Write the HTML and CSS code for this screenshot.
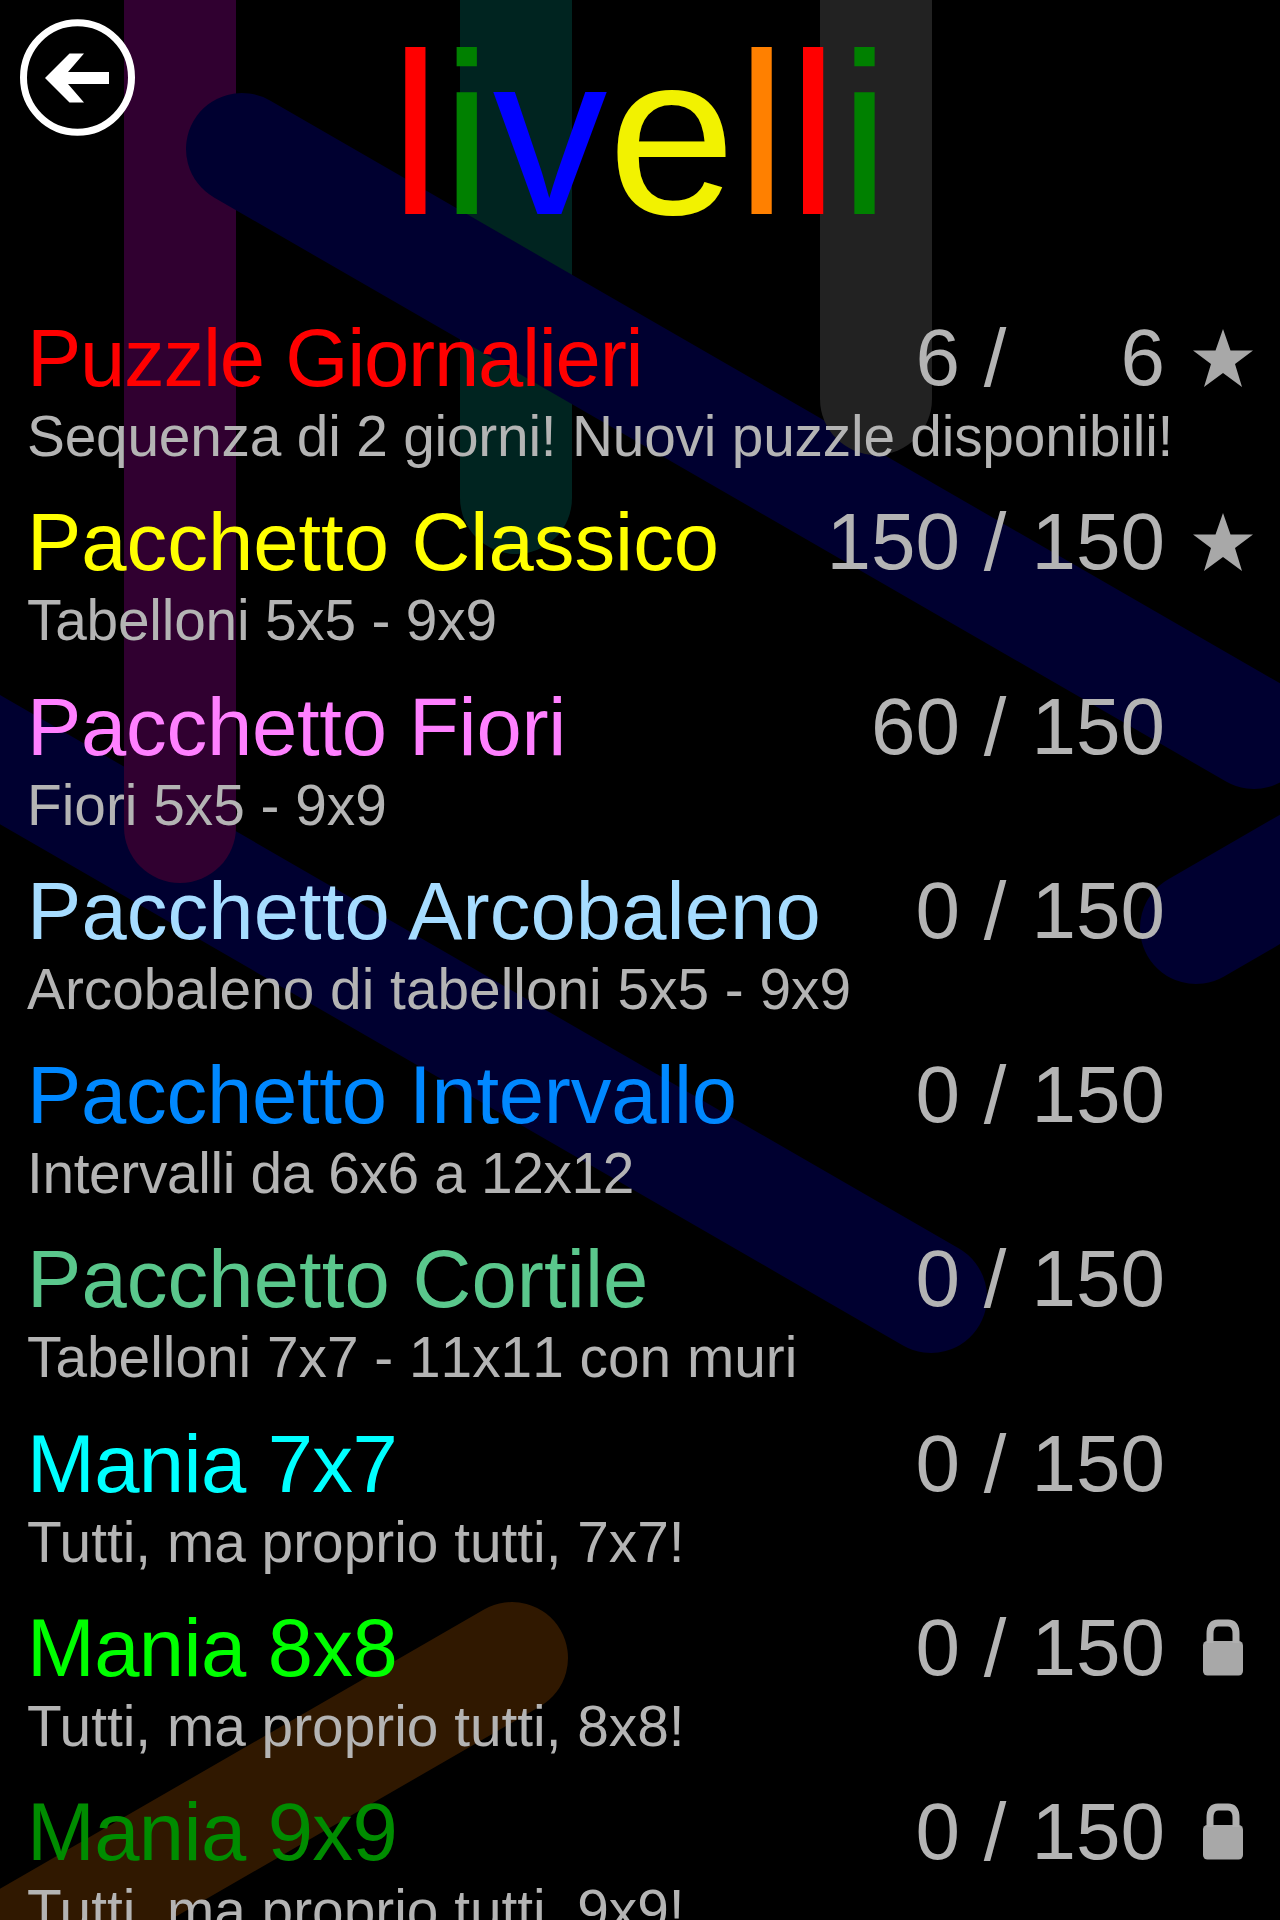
FILE: index.html
```html
<!DOCTYPE html>
<html lang="it">
<head>
<meta charset="utf-8">
<title>Livelli</title>
<link rel="stylesheet" href="styles.css">
</head>
<body>
<main class="screen">
  <svg class="pipes" viewBox="0 0 1280 1920" aria-hidden="true">
    <path class="pipe teal" d="M516 -80V498"/>
    <path class="pipe blue" d="M-100 702L931 1297M1196 928L1400 810"/>
    <path class="pipe purple" d="M180 -80V827"/>
    <path class="pipe blue" d="M242 149L1254 733"/>
    <path class="pipe gray" d="M876 -80V399"/>
    <path class="pipe orange" d="M512 1658L-100 2011"/>
  </svg>
  <header class="top">
    <svg class="back" viewBox="0 0 116 118" aria-label="Indietro">
      <ellipse cx="57.500" cy="58.500" rx="54" ry="54.700" fill="none" stroke="#fff" stroke-width="7"/>
      <path d="M25 59L49.500 34.500H64L48 53H89V65H48L64 83.500H49.500Z" fill="#fff"/>
    </svg>
    <h1 class="title"><span class="red">l</span><span class="green">i</span><span class="royal">v</span><span class="yellow">e</span><span class="tangerine">l</span><span class="red">l</span><span class="green">i</span></h1>
  </header>
  <section class="packs">
    <article class="pack"><h2 class="name c1">Puzzle Giornalieri</h2><span class="num">6</span><span class="slash">/</span><span class="num">6</span><svg class="icon" viewBox="0 0 60 58"><path d="M30 0L37.500 21.500H60L42 35L49 58L30 44L11 58L18 35L0 21.500H22.500Z"/></svg><p class="info i1">Sequenza di 2 giorni! Nuovi puzzle disponibili!</p></article>
    <article class="pack"><h2 class="name c2">Pacchetto Classico</h2><span class="num">150</span><span class="slash">/</span><span class="num">150</span><svg class="icon" viewBox="0 0 60 58"><path d="M30 0L37.500 21.500H60L42 35L49 58L30 44L11 58L18 35L0 21.500H22.500Z"/></svg><p class="info i1">Tabelloni 5x5 - 9x9</p></article>
    <article class="pack"><h2 class="name c3">Pacchetto Fiori</h2><span class="num">60</span><span class="slash">/</span><span class="num">150</span><p class="info">Fiori 5x5 - 9x9</p></article>
    <article class="pack"><h2 class="name c4">Pacchetto Arcobaleno</h2><span class="num">0</span><span class="slash">/</span><span class="num">150</span><p class="info">Arcobaleno di tabelloni 5x5 - 9x9</p></article>
    <article class="pack"><h2 class="name c5">Pacchetto Intervallo</h2><span class="num">0</span><span class="slash">/</span><span class="num">150</span><p class="info i5">Intervalli da 6x6 a 12x12</p></article>
    <article class="pack"><h2 class="name c6">Pacchetto Cortile</h2><span class="num">0</span><span class="slash">/</span><span class="num">150</span><p class="info">Tabelloni 7x7 - <span class="loose">11x11</span> con muri</p></article>
    <article class="pack"><h2 class="name c7">Mania 7x7</h2><span class="num">0</span><span class="slash">/</span><span class="num">150</span><p class="info">Tutti, ma proprio tutti, 7x7!</p></article>
    <article class="pack"><h2 class="name c8">Mania 8x8</h2><span class="num">0</span><span class="slash">/</span><span class="num">150</span><svg class="icon" viewBox="0 0 60 58"><rect x="10" y="22" width="40" height="34.500" rx="4.500"/><path class="shackle" d="M17 24V15Q17 4 25 4H35Q43 4 43 15V24"/></svg><p class="info">Tutti, ma proprio tutti, 8x8!</p></article>
    <article class="pack"><h2 class="name c9">Mania 9x9</h2><span class="num">0</span><span class="slash">/</span><span class="num">150</span><svg class="icon" viewBox="0 0 60 58"><rect x="10" y="22" width="40" height="34.500" rx="4.500"/><path class="shackle" d="M17 24V15Q17 4 25 4H35Q43 4 43 15V24"/></svg><p class="info">Tutti, ma proprio tutti, 9x9!</p></article>
  </section>
</main>
</body>
</html>
```
FILE: styles.css
```css
* { box-sizing: border-box; }
body { margin: 0; background: #000; }
.screen {
  position: relative;
  width: 1280px;
  height: 1920px;
  overflow: hidden;
  background: #000;
  font-family: "Liberation Sans", Arial, sans-serif;
  color: #b4b4b4;
}
.pipes { position: absolute; inset: 0; width: 1280px; height: 1920px; }
.pipe { fill: none; stroke-width: 112; stroke-linecap: round; }
.pipe.teal { stroke: #002420; }
.pipe.blue { stroke: #000030; }
.pipe.purple { stroke: #300030; }
.pipe.gray { stroke: #222; }
.pipe.orange { stroke: #301800; }

.top {
  position: relative;
  display: grid;
  grid-template-columns: 116px 1fr 116px;
  height: 309px;
  padding: 19px 20px 0;
}
.back { width: 116px; height: 118px; }
.title {
  margin: 0;
  text-align: center;
  font-size: 230px;
  font-weight: 400;
  line-height: 232px;
  letter-spacing: 0.3px;
}
.red { color: #f00; }
.green { color: #008000; }
.royal { color: #00f; }
.yellow { color: #f2f200; }
.tangerine { color: #ff8000; }

.packs { position: relative; }
.pack {
  display: grid;
  grid-template-columns: 766px 168px 68px 137px 114px;
  grid-template-rows: 100px 84.300px;
  padding-left: 27px;
  font-size: 81.400px;
  line-height: 98px;
  white-space: nowrap;
}
.name { margin: 0; font-size: inherit; font-weight: 400; }
.num { text-align: right; font-size: 80px; padding-right: 1px; }
.slash { text-align: center; }
.icon { width: 60px; height: 58px; margin: 20px auto 0; fill: #a8a8a8; }
.shackle { fill: none; stroke: #b0b0b0; stroke-width: 7; }
.info {
  grid-column: 1 / -1;
  margin: 0;
  font-size: 56.800px;
  line-height: 56px;
}
.i1 { letter-spacing: -0.2px; }
.i5 { letter-spacing: -0.35px; }
.loose { font-kerning: none; }
.c1 { color: #f00; letter-spacing: -1.25px; }
.c2 { color: #ff0; }
.c3 { color: #ff80ff; letter-spacing: -0.25px; }
.c4 { color: #a6dcff; letter-spacing: 0.1px; }
.c5 { color: #0088ff; letter-spacing: -0.25px; }
.c6 { color: #5ac78c; letter-spacing: 0.1px; }
.c7 { color: #0ff; letter-spacing: -0.6px; }
.c8 { color: #0f0; letter-spacing: -0.6px; }
.c9 { color: #008c00; letter-spacing: -0.6px; }
```
